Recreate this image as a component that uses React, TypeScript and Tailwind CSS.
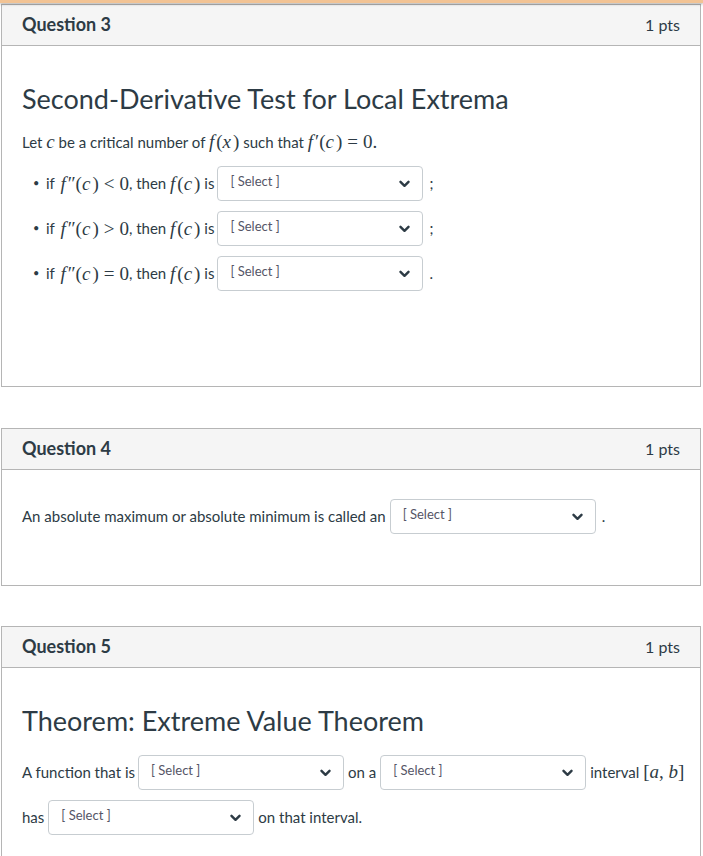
import React from "react";

const mathFont = { fontFamily: '"Liberation Serif", "DejaVu Serif", serif' };

function V({ children, tight = false }: { children: React.ReactNode; tight?: boolean }) {
  return <i className={tight ? "leading-none" : "pr-[2px] leading-none"}>{children}</i>;
}

function M({ children }: { children: React.ReactNode }) {
  return (
    <span className="text-[19px] leading-none whitespace-nowrap" style={mathFont}>
      {children}
    </span>
  );
}

function Op({ children }: { children: React.ReactNode }) {
  return <span className="mx-[5px]">{children}</span>;
}

function Select() {
  return (
    <div className="mx-[3px] flex h-[35px] w-[206px] shrink-0 items-center justify-between rounded-[4px] border border-[#c7cdd1] bg-white pl-[12px] pr-[12px]">
      <span className="-mt-[3px] text-[13px] text-[#555566]">[ Select ]</span>
      <svg width="11" height="8" viewBox="0 0 11 8" fill="none">
        <polyline
          points="1.5,1.8 5.5,5.8 9.5,1.8"
          stroke="#2d3b45"
          strokeWidth="2.4"
          strokeLinecap="round"
          strokeLinejoin="round"
        />
      </svg>
    </div>
  );
}

function Card({
  title,
  children,
  className = "",
}: {
  title: string;
  children: React.ReactNode;
  className?: string;
}) {
  return (
    <div className={`ml-px w-[700px] border border-[#b5b5b5] bg-white ${className}`}>
      <div className="flex h-[41px] items-center justify-between border-b border-[#b5b5b5] bg-[#f5f5f5] px-[20px]">
        <h3 className="-mt-[1px] text-[18px] font-bold text-[#2d3b45]">{title}</h3>
        <span className="text-[16px] text-[#2d3b45]">1 pts</span>
      </div>
      <div className="px-[20px]">{children}</div>
    </div>
  );
}

function Bullet({ op, end }: { op: string; end: string }) {
  return (
    <li className="flex h-[45px] items-center">
      <span className="w-[24px] pl-[11px] text-[11px]">•</span>
      <span className="mr-[2px]">if&nbsp;</span>
      <M>
        <V>f</V>″(<V>c</V>)<Op>{op}</Op>0
      </M>
      <span>, then&nbsp;</span>
      <M>
        <V>f</V>(<V>c</V>)
      </M>
      <span>&nbsp;is</span>
      <Select />
      <span className="ml-[3px]">{end}</span>
    </li>
  );
}

export default function App() {
  return (
    <div
      className="min-h-screen bg-white text-[15px] text-[#2d3b45]"
      style={{ fontFamily: 'Lato, "Noto Sans", sans-serif' }}
    >
      <div className="relative z-10 h-[3px] bg-[#f2c394] shadow-[0_1px_3px_rgba(0,0,0,0.35)]" />

      <Card title="Question 3" className="mt-px">
        <div className="pb-[90px] pt-[32px]">
          <h2 className="text-[27px] leading-[42px]">Second-Derivative Test for Local Extrema</h2>
          <p className="mt-[10px] leading-[24px]">
            Let <M><V tight>c</V></M> be a critical number of{" "}
            <M>
              <V>f</V>(<V>x</V>)
            </M>{" "}
            such that{" "}
            <M>
              <V>f</V>′(<V>c</V>)<Op>=</Op>0.
            </M>
          </p>
          <ul className="mt-[7px]">
            <Bullet op="<" end=";" />
            <Bullet op=">" end=";" />
            <Bullet op="=" end="." />
          </ul>
        </div>
      </Card>

      <Card title="Question 4" className="mt-[41px]">
        <div className="pb-[46px] pt-[24px]">
          <div className="flex h-[45px] items-center">
            <span className="mr-[1px]">An absolute maximum or absolute minimum is called an</span>
            <Select />
            <span className="ml-[3px]">.</span>
          </div>
        </div>
      </Card>

      <Card title="Question 5" className="mt-[40px]">
        <div className="pb-[40px] pt-[32px]">
          <h2 className="text-[27px] leading-[42px]">Theorem: Extreme Value Theorem</h2>
          <div className="mt-[8px] flex h-[45px] items-center whitespace-nowrap">
            <span>A function that is</span>
            <Select />
            <span className="mx-[1px]">on a</span>
            <Select />
            <span className="ml-[1px]">
              interval{" "}
              <M>
                [<V tight>a</V>, <V tight>b</V>]
              </M>
            </span>
          </div>
          <div className="flex h-[45px] items-center whitespace-nowrap">
            <span className="mr-[1px]">has</span>
            <Select />
            <span className="ml-[1px]">on that interval.</span>
          </div>
        </div>
      </Card>
    </div>
  );
}
